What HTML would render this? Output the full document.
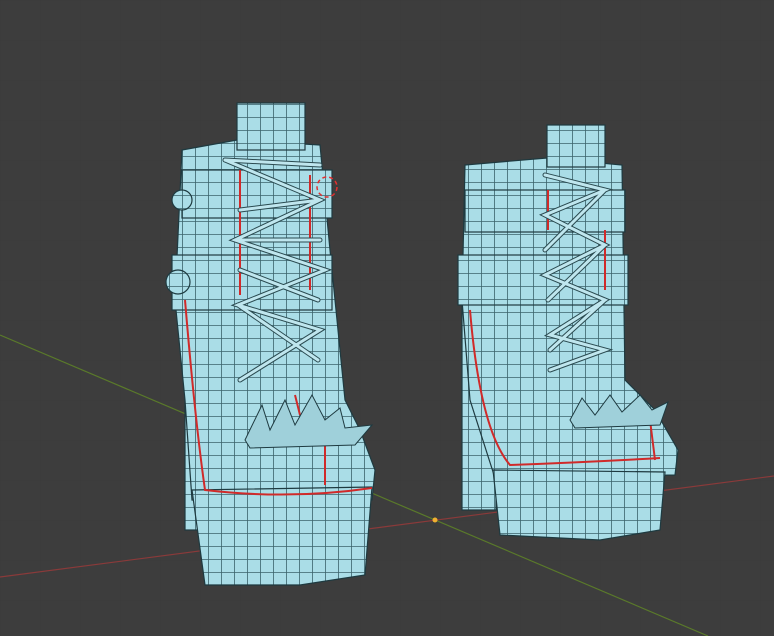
<!DOCTYPE html>
<html><head><meta charset="utf-8"><style>
html,body{margin:0;padding:0;background:#3d3d3d;width:774px;height:636px;overflow:hidden}
svg{display:block}
</style></head><body>
<svg width="774" height="636" viewBox="0 0 774 636" xmlns="http://www.w3.org/2000/svg">
<defs>
<pattern id="bg" width="40" height="40" patternUnits="userSpaceOnUse">
<rect width="40" height="40" fill="#3d3d3d"/>
<path d="M0 0H40M0 0V40" stroke="#3a3a3a" stroke-width="1"/>
</pattern>
<pattern id="w" width="13" height="13" patternUnits="userSpaceOnUse">
<rect width="13" height="13" fill="#aadde7"/>
<path d="M0 0.5H13M0.5 0V13" stroke="#3b636b" stroke-width="0.8"/>
</pattern>
</defs>
<rect width="774" height="636" fill="url(#bg)"/>
<line x1="0" y1="335" x2="708" y2="636" stroke="#5a7a2a" stroke-width="1.2"/>
<line x1="0" y1="577" x2="774" y2="476" stroke="#8a3a3a" stroke-width="1.2"/>
<g stroke="#1e3a40" stroke-width="1.2" fill="url(#w)">
<!-- left boot -->
<rect x="185" y="290" width="32" height="240"/>
<path d="M182 150 L237 140 L320 145 L330 250 L345 400 L360 430 L375 470 L372 500 L192 500 L185 400 L175 300 Z"/>
<path d="M192 490 L372 487 L365 575 L300 585 L205 585 Z"/>
<rect x="237" y="103" width="68" height="47"/>
<rect x="182" y="170" width="150" height="48"/>
<rect x="172" y="255" width="160" height="55"/>
<circle cx="182" cy="200" r="10"/>
<circle cx="178" cy="282" r="12"/>
<!-- right boot -->
<rect x="462" y="300" width="34" height="210"/>
<path d="M465 165 L547 158 L622 165 L625 380 L655 410 L678 450 L675 475 L495 478 L470 400 L462 300 Z"/>
<path d="M493 470 L665 472 L660 530 L600 540 L500 535 Z"/>
<rect x="547" y="125" width="58" height="42"/>
<rect x="465" y="190" width="160" height="42"/>
<rect x="458" y="255" width="170" height="50"/>
</g>
<g stroke="#d02a2a" stroke-width="2" fill="none">
<path d="M240 170 V295"/><path d="M310 175 V290"/>
<path d="M185 300 Q195 420 205 490 Q290 500 372 488"/>
<path d="M325 425 V485"/><path d="M295 395 L300 415"/>
<path d="M548 190 V230"/><path d="M605 230 V290"/>
<path d="M470 310 Q480 430 510 465 Q590 462 660 458"/>
<path d="M650 420 L655 460"/>
</g>
<g stroke="#2a4a50" stroke-width="5" fill="none" stroke-linecap="round">
<path d="M225 160 L320 200 L235 240 L325 270 L238 305 L320 330 L240 380 M225 160 L320 165 M320 200 L240 210 M235 240 L320 240 M240 270 L318 300 M238 305 L318 360"/>
<path d="M545 175 L605 190 L545 215 L605 245 L545 275 L605 300 L550 335 L605 350 L550 370 M605 190 L545 250 M605 245 L548 300 M605 300 L550 350"/>
</g>
<g stroke="#bfe6ee" stroke-width="3" fill="none" stroke-linecap="round">
<path d="M225 160 L320 200 L235 240 L325 270 L238 305 L320 330 L240 380 M225 160 L320 165 M320 200 L240 210 M235 240 L320 240 M240 270 L318 300 M238 305 L318 360"/>
<path d="M545 175 L605 190 L545 215 L605 245 L545 275 L605 300 L550 335 L605 350 L550 370 M605 190 L545 250 M605 245 L548 300 M605 300 L550 350"/>
</g>
<g fill="#9fd0da" stroke="#1e3a40" stroke-width="1">
<path d="M245 440 L262 405 L270 430 L285 400 L295 425 L312 395 L325 420 L340 408 L345 428 L372 425 L355 445 L250 448 Z"/>
<path d="M570 420 L582 398 L595 415 L610 395 L622 412 L640 395 L652 410 L668 402 L660 425 L575 428 Z"/>
</g>
<circle cx="327" cy="187" r="10" fill="none" stroke="#e03030" stroke-width="1.5" stroke-dasharray="4 3"/>
<circle cx="435" cy="520" r="2.5" fill="#f0b030"/>
</svg>
</body></html>
